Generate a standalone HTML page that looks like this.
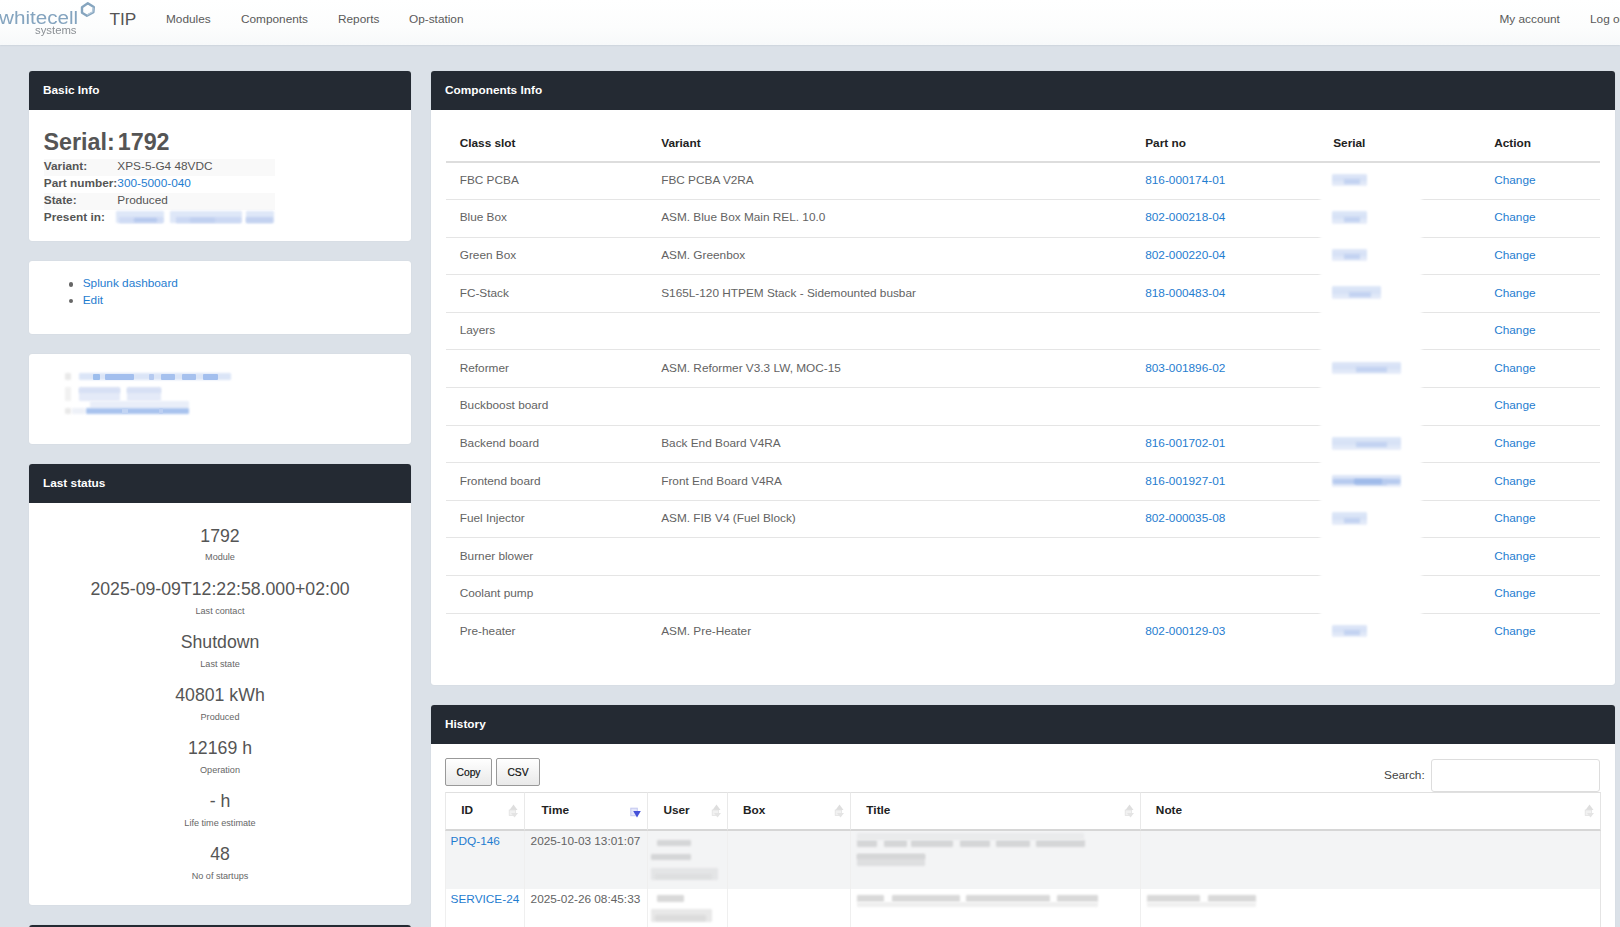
<!DOCTYPE html>
<html lang="en">
<head>
<meta charset="utf-8">
<title>TIP</title>
<style>
*{box-sizing:border-box}
html,body{margin:0;padding:0}
body{width:1620px;height:927px;overflow:hidden;background:#dbe1e8;font-family:"Liberation Sans",Arial,sans-serif;font-size:11.82px;color:#555;position:relative}
a{color:#1f7dd0;text-decoration:none}
#nav{position:absolute;left:0;top:0;width:1620px;height:45px;background:linear-gradient(#fff,#fcfdfd 60%,#f7f9fa);box-shadow:0 0.5px 1.5px rgba(170,182,195,.55)}
#nav .it{position:absolute;top:11.5px;font-size:11.82px;color:#5a5a5a;white-space:nowrap}
#logo1{position:absolute;left:-1px;top:7.7px;font-size:17.5px;line-height:20px;color:#84a4bf;transform-origin:0 0;transform:scaleX(1.18);white-space:nowrap}
#logo2{position:absolute;left:35px;top:25.4px;font-size:10.3px;line-height:12px;color:#8a8f94;transform-origin:0 0;transform:scaleX(1.1)}
#tip{position:absolute;left:109.5px;top:9.2px;font-size:17.3px;line-height:20px;color:#555}
.panel{position:absolute;background:#fff;border-radius:3px;box-shadow:0 0 1px rgba(160,170,180,.4)}
.hd{position:absolute;left:0;top:0;right:0;height:39px;background:#242a33;border-radius:3px 3px 0 0;color:#fff;font-weight:bold;font-size:11.82px;line-height:39px;padding-left:14px}

#p1 h2{position:absolute;left:14.5px;top:57px;margin:0;font-size:23.3px;line-height:28px;font-weight:bold;color:#555;white-space:nowrap;letter-spacing:0}
#bi{position:absolute;left:14.8px;top:87.8px;width:231px;border-collapse:collapse;font-size:11.82px}
#bi td{padding:0 0 2px 0;height:17px;line-height:15px;color:#555;white-space:nowrap}
#bi td.l{font-weight:bold;width:72.3px;color:#555}
#bi tr.o td{background:#f9f9f9}
.blur{position:absolute;filter:blur(1.2px)}

#p2 ul{position:absolute;left:0;top:13.7px;margin:0;padding:0;list-style:none}
#p2 li{position:relative;padding-left:53.7px;height:16.6px;line-height:16.6px;font-size:11.82px;white-space:nowrap}
#p2 li:before{content:"";position:absolute;left:39.6px;top:7.4px;width:4.2px;height:4.2px;border-radius:50%;background:#666}
.st{position:absolute;left:0;width:382px;text-align:center;white-space:nowrap}
.st.v{font-size:17.7px;line-height:20px;color:#555}
.st.k{font-size:9.1px;line-height:12px;color:#666}
#ct{position:absolute;left:14.5px;top:53px;width:1154.5px;border-collapse:collapse;table-layout:fixed;font-size:11.82px}
#ct th{height:38px;padding:0 0 0 14.2px;text-align:left;font-weight:bold;color:#222;border-bottom:2px solid #ddd;white-space:nowrap}
#ct td{height:37.6px;padding:0 0 2px 14.2px;color:#636363;border-top:1px solid #e5e5e5;white-space:nowrap}
#ct tr:first-child td{border-top:0}

.btn{position:absolute;top:53.3px;height:27.4px;border:1px solid #999;border-radius:2px;background:linear-gradient(#fff,#e9e9e9);color:#111;font-size:10.3px;line-height:27px;text-align:center;-webkit-text-stroke:0.2px #111}
#srch{position:absolute;left:953px;top:62px;font-size:11.82px;color:#444;line-height:16px}
#sin{position:absolute;left:1000px;top:53.5px;width:169px;height:33px;border:1px solid #ddd;border-radius:3px;background:#fff}
#ht{position:absolute;left:14px;top:87px;width:1155.5px;border-collapse:separate;border-spacing:0;table-layout:fixed;font-size:11.82px}
#ht th{position:relative;height:39px;padding:0 0 2.6px 15.2px;text-align:left;font-weight:bold;color:#222;border-top:1px solid #e0e0e0;border-left:1px solid #e9e9e9;border-bottom:2px solid #d6d6d6;white-space:nowrap}
#ht th:last-child,#ht td:last-child{border-right:1px solid #e4e4e4}
#ht td{padding:2px 0 0 4.6px;vertical-align:top;color:#636363;border-left:1px solid #efefef;white-space:nowrap;line-height:16px}
#ht tr.o td{background:#f3f4f5}

#ht th:nth-child(2){padding-left:16.6px}
#ht td:nth-child(2){padding-left:5.6px}
.si{position:absolute;right:4px;top:10px;width:14px;height:16px}

.b{position:absolute;filter:blur(1px);border-radius:1px}
.bw{position:absolute;background:#fff;filter:blur(1.5px)}
</style>
</head>
<body>
<div id="nav">
  <div id="logo1">whitecell</div>
  <div id="logo2">systems</div>
  <svg style="position:absolute;left:78px;top:0" width="20" height="20" viewBox="78 0 20 20"><polygon points="87.8,3.3 93.8,7 93.4,12.2 86.9,15.7 82,12.8 82,7.2" fill="none" stroke="#86a5bf" stroke-width="2.4" stroke-linejoin="round"/><polyline points="93.2,7.6 92.8,11.8 86.9,14.9" fill="none" stroke="#b9cddd" stroke-width="1.1" stroke-linejoin="round"/></svg>
  <div id="tip">TIP</div>
  <div class="it" style="left:166px">Modules</div>
  <div class="it" style="left:241px">Components</div>
  <div class="it" style="left:338px">Reports</div>
  <div class="it" style="left:409px">Op-station</div>
  <div class="it" style="left:1499.5px">My account</div>
  <div class="it" style="left:1590px">Log out</div>
</div>

<!-- Basic info -->
<div class="panel" id="p1" style="left:29px;top:71px;width:382px;height:170px">
  <div class="hd">Basic Info</div>
  <h2>Serial:<span style="margin-left:3px">1792</span></h2>
  <table id="bi">
    <tr class="o"><td class="l">Variant:</td><td>XPS-5-G4 48VDC</td></tr>
    <tr><td class="l">Part number:</td><td><a>300-5000-040</a></td></tr>
    <tr class="o"><td class="l">State:</td><td>Produced</td></tr>
    <tr><td class="l">Present in:</td><td></td></tr>
  </table>
<div class="b" style="left:86.5px;top:139.8px;width:48.5px;height:12.5px;background:#dee7f8"></div><div class="b" style="left:140.5px;top:139.8px;width:72.5px;height:12.5px;background:#dee7f8"></div><div class="b" style="left:216.5px;top:139.8px;width:28.1px;height:12.5px;background:#dee7f8"></div><div class="b" style="left:90.0px;top:146.3px;width:44.0px;height:5.3px;background:#cfdbf4"></div><div class="b" style="left:105.0px;top:146.6px;width:23.0px;height:4.7px;background:#b6c9ee"></div><div class="b" style="left:147.0px;top:146.3px;width:65.0px;height:5.3px;background:#cbd8f3"></div><div class="b" style="left:161.0px;top:147.0px;width:25.0px;height:4.0px;background:#bfcff0"></div><div class="b" style="left:217.0px;top:146.3px;width:27.0px;height:5.3px;background:#c3d2f0"></div>
</div>
<div class="panel" id="p2" style="left:29px;top:261.3px;width:382px;height:72.9px">
  <ul><li><a>Splunk dashboard</a></li><li><a>Edit</a></li></ul>
</div>
<div class="panel" id="p3" style="left:29px;top:353.5px;width:382px;height:90.8px"><div class="b" style="left:36.0px;top:19.8px;width:6.4px;height:6.7px;background:#e9e9e9"></div><div class="b" style="left:49.5px;top:19.8px;width:152.5px;height:6.9px;background:#dbe5f7"></div><div class="b" style="left:63.5px;top:20.1px;width:7.1px;height:6.4px;background:#9dbeed;filter:blur(0.7px)"></div><div class="b" style="left:76.4px;top:20.1px;width:28.8px;height:6.4px;background:#a3bfee;filter:blur(0.7px)"></div><div class="b" style="left:120.0px;top:20.1px;width:5.0px;height:6.4px;background:#b5caf0;filter:blur(0.7px)"></div><div class="b" style="left:132.0px;top:20.1px;width:14.0px;height:6.4px;background:#a6c1ee;filter:blur(0.7px)"></div><div class="b" style="left:153.0px;top:20.1px;width:14.0px;height:6.4px;background:#a6c1ee;filter:blur(0.7px)"></div><div class="b" style="left:173.8px;top:20.1px;width:15.2px;height:6.4px;background:#a3bfee;filter:blur(0.7px)"></div><div class="b" style="left:36.0px;top:33.7px;width:6.4px;height:13.5px;background:#f1f1f1"></div><div class="b" style="left:50.0px;top:33.7px;width:41.0px;height:13.5px;background:#e4eaf8"></div><div class="b" style="left:50.0px;top:34.0px;width:41.0px;height:5.5px;background:#d7e0f4"></div><div class="b" style="left:98.0px;top:33.7px;width:34.0px;height:13.5px;background:#e4eaf8"></div><div class="b" style="left:98.0px;top:34.0px;width:34.0px;height:5.5px;background:#d7e0f4"></div><div class="b" style="left:36.0px;top:54.2px;width:6.4px;height:6.5px;background:#e9e9e9"></div><div class="b" style="left:43.0px;top:54.2px;width:13.0px;height:6.5px;background:#eef1f8"></div><div class="b" style="left:61.0px;top:47.5px;width:98.7px;height:7.0px;background:#e9eef9"></div><div class="b" style="left:56.5px;top:54.2px;width:103.2px;height:6.7px;background:#a9c3ee"></div><div class="b" style="left:93.0px;top:54.2px;width:6.0px;height:6.7px;background:#c2d4f3;filter:blur(0.6px)"></div><div class="b" style="left:130.0px;top:54.2px;width:4.0px;height:6.7px;background:#bccff2;filter:blur(0.6px)"></div></div>
<div class="panel" id="p4" style="left:29px;top:464px;width:382px;height:441px">
  <div class="hd">Last status</div>
  <div class="st v" style="top:62.0px">1792</div>
  <div class="st k" style="top:87.0px">Module</div>
  <div class="st v" style="top:115.0px">2025-09-09T12:22:58.000+02:00</div>
  <div class="st k" style="top:141.0px">Last contact</div>
  <div class="st v" style="top:168.0px">Shutdown</div>
  <div class="st k" style="top:194.0px">Last state</div>
  <div class="st v" style="top:221.0px">40801 kWh</div>
  <div class="st k" style="top:247.0px">Produced</div>
  <div class="st v" style="top:274.0px">12169 h</div>
  <div class="st k" style="top:300.0px">Operation</div>
  <div class="st v" style="top:327.0px">- h</div>
  <div class="st k" style="top:353.0px">Life time estimate</div>
  <div class="st v" style="top:380.0px">48</div>
  <div class="st k" style="top:406.0px">No of startups</div>

</div>
<div class="panel" id="p5" style="left:29px;top:925px;width:382px;height:60px">
  <div class="hd"></div>
</div>
<div class="panel" id="p6" style="left:431px;top:71px;width:1184px;height:614px">
  <div class="hd">Components Info</div>
<table id="ct"><colgroup><col style="width:201.5px"><col style="width:484px"><col style="width:188px"><col style="width:161px"><col></colgroup>
<thead><tr><th>Class slot</th><th>Variant</th><th>Part no</th><th>Serial</th><th>Action</th></tr></thead>
<tbody>
<tr><td>FBC PCBA</td><td>FBC PCBA V2RA</td><td><a>816-000174-01</a></td><td></td><td><a>Change</a></td></tr>
<tr><td>Blue Box</td><td>ASM. Blue Box Main REL. 10.0</td><td><a>802-000218-04</a></td><td></td><td><a>Change</a></td></tr>
<tr><td>Green Box</td><td>ASM. Greenbox</td><td><a>802-000220-04</a></td><td></td><td><a>Change</a></td></tr>
<tr><td>FC-Stack</td><td>S165L-120 HTPEM Stack - Sidemounted busbar</td><td><a>818-000483-04</a></td><td></td><td><a>Change</a></td></tr>
<tr><td>Layers</td><td></td><td></td><td></td><td><a>Change</a></td></tr>
<tr><td>Reformer</td><td>ASM. Reformer V3.3 LW, MOC-15</td><td><a>803-001896-02</a></td><td></td><td><a>Change</a></td></tr>
<tr><td>Buckboost board</td><td></td><td></td><td></td><td><a>Change</a></td></tr>
<tr><td>Backend board</td><td>Back End Board V4RA</td><td><a>816-001702-01</a></td><td></td><td><a>Change</a></td></tr>
<tr><td>Frontend board</td><td>Front End Board V4RA</td><td><a>816-001927-01</a></td><td></td><td><a>Change</a></td></tr>
<tr><td>Fuel Injector</td><td>ASM. FIB V4 (Fuel Block)</td><td><a>802-000035-08</a></td><td></td><td><a>Change</a></td></tr>
<tr><td>Burner blower</td><td></td><td></td><td></td><td><a>Change</a></td></tr>
<tr><td>Coolant pump</td><td></td><td></td><td></td><td><a>Change</a></td></tr>
<tr><td>Pre-heater</td><td>ASM. Pre-Heater</td><td><a>802-000129-03</a></td><td></td><td><a>Change</a></td></tr>
</tbody></table>
<div class="bw" style="left:889.0px;top:95.0px;width:102.0px;height:482.0px"></div><div class="b" style="left:901.0px;top:102.7px;width:35.0px;height:12.8px;background:linear-gradient(#dfe8f8,#d6e1f6 45%,#dbe5f7 60%,#e9eefa)"></div><div class="b" style="left:913.2px;top:108.0px;width:15.8px;height:5.0px;background:#c3d3f1"></div><div class="b" style="left:901.0px;top:140.2px;width:35.0px;height:12.8px;background:linear-gradient(#dfe8f8,#d6e1f6 45%,#dbe5f7 60%,#e9eefa)"></div><div class="b" style="left:913.2px;top:145.5px;width:15.8px;height:5.0px;background:#c3d3f1"></div><div class="b" style="left:901.0px;top:177.7px;width:35.0px;height:12.8px;background:linear-gradient(#dfe8f8,#d6e1f6 45%,#dbe5f7 60%,#e9eefa)"></div><div class="b" style="left:913.2px;top:183.0px;width:15.8px;height:5.0px;background:#c3d3f1"></div><div class="b" style="left:901.0px;top:215.4px;width:48.5px;height:12.8px;background:linear-gradient(#dfe8f8,#d6e1f6 45%,#dbe5f7 60%,#e9eefa)"></div><div class="b" style="left:918.0px;top:220.7px;width:21.8px;height:5.0px;background:#c3d3f1"></div><div class="b" style="left:901.0px;top:290.7px;width:69.0px;height:12.8px;background:linear-gradient(#dfe8f8,#d6e1f6 45%,#dbe5f7 60%,#e9eefa)"></div><div class="b" style="left:925.2px;top:296.0px;width:31.0px;height:5.0px;background:#c3d3f1"></div><div class="b" style="left:901.0px;top:366.1px;width:69.0px;height:12.8px;background:linear-gradient(#dfe8f8,#d6e1f6 45%,#dbe5f7 60%,#e9eefa)"></div><div class="b" style="left:925.2px;top:371.4px;width:31.0px;height:5.0px;background:#c3d3f1"></div><div class="b" style="left:901.0px;top:403.5px;width:69.0px;height:12.8px;background:linear-gradient(#dfe8f8,#d6e1f6 45%,#dbe5f7 60%,#e9eefa)"></div><div class="b" style="left:925.2px;top:408.8px;width:31.0px;height:5.0px;background:#c3d3f1"></div><div class="b" style="left:901.0px;top:441.2px;width:35.0px;height:12.8px;background:linear-gradient(#dfe8f8,#d6e1f6 45%,#dbe5f7 60%,#e9eefa)"></div><div class="b" style="left:913.2px;top:446.5px;width:15.8px;height:5.0px;background:#c3d3f1"></div><div class="b" style="left:901.0px;top:553.7px;width:35.0px;height:12.8px;background:linear-gradient(#dfe8f8,#d6e1f6 45%,#dbe5f7 60%,#e9eefa)"></div><div class="b" style="left:913.2px;top:559.0px;width:15.8px;height:5.0px;background:#c3d3f1"></div><div class="b" style="left:902.0px;top:407.5px;width:67.0px;height:5.0px;background:#b7cbef"></div><div class="b" style="left:923.0px;top:407.5px;width:28.0px;height:5.0px;background:#9fbbea"></div>
</div>
<div class="panel" id="p7" style="left:431px;top:705px;width:1184px;height:300px">
  <div class="hd">History</div>
<div class="btn" style="left:14px;width:47px">Copy</div>
<div class="btn" style="left:65px;width:44px">CSV</div>
<div id="srch">Search:</div><div id="sin"></div>
<table id="ht"><colgroup><col style="width:79px"><col style="width:123.2px"><col style="width:79.7px"><col style="width:123.3px"><col style="width:289.5px"><col></colgroup>
<thead><tr><th>ID<svg class="si" viewBox="0 0 14 16"><polygon points="7.5,1.5 11.5,7 3.5,7" fill="#dedede"/><rect x="3.2" y="7" width="6.3" height="5.5" fill="#f1f1f1" stroke="#e3e3e3" stroke-width=".8"/><polygon points="5,10 12,10 8.5,14.5" fill="#e4e4e4"/></svg></th><th>Time<svg class="si" viewBox="0 0 14 16"><rect x="1.8" y="5.2" width="6.5" height="7.5" fill="#e4e6fa" stroke="#c3c8f0" stroke-width="1"/><polygon points="4.2,8 11.8,8 8,14.6" fill="#4450d8"/></svg></th><th>User<svg class="si" viewBox="0 0 14 16"><polygon points="7.5,1.5 11.5,7 3.5,7" fill="#dedede"/><rect x="3.2" y="7" width="6.3" height="5.5" fill="#f1f1f1" stroke="#e3e3e3" stroke-width=".8"/><polygon points="5,10 12,10 8.5,14.5" fill="#e4e4e4"/></svg></th><th>Box<svg class="si" viewBox="0 0 14 16"><polygon points="7.5,1.5 11.5,7 3.5,7" fill="#dedede"/><rect x="3.2" y="7" width="6.3" height="5.5" fill="#f1f1f1" stroke="#e3e3e3" stroke-width=".8"/><polygon points="5,10 12,10 8.5,14.5" fill="#e4e4e4"/></svg></th><th>Title<svg class="si" viewBox="0 0 14 16"><polygon points="7.5,1.5 11.5,7 3.5,7" fill="#dedede"/><rect x="3.2" y="7" width="6.3" height="5.5" fill="#f1f1f1" stroke="#e3e3e3" stroke-width=".8"/><polygon points="5,10 12,10 8.5,14.5" fill="#e4e4e4"/></svg></th><th>Note<svg class="si" viewBox="0 0 14 16"><polygon points="7.5,1.5 11.5,7 3.5,7" fill="#dedede"/><rect x="3.2" y="7" width="6.3" height="5.5" fill="#f1f1f1" stroke="#e3e3e3" stroke-width=".8"/><polygon points="5,10 12,10 8.5,14.5" fill="#e4e4e4"/></svg></th></tr></thead>
<tbody>
<tr class="o" style="height:58px"><td><a>PDQ-146</a></td><td>2025-10-03 13:01:07</td><td></td><td></td><td></td><td></td></tr>
<tr style="height:60px"><td><a>SERVICE-24</a></td><td>2025-02-26 08:45:33</td><td></td><td></td><td></td><td></td></tr>
</tbody></table>
<div class="b" style="left:225.6px;top:135.0px;width:34.0px;height:6.0px;background:#d5d6d7"></div><div class="b" style="left:220.0px;top:148.7px;width:39.6px;height:6.7px;background:#d5d6d7"></div><div class="b" style="left:220.0px;top:162.5px;width:67.0px;height:12.5px;background:#e4e5e6"></div><div class="b" style="left:224.0px;top:169.0px;width:57.0px;height:5.0px;background:#dedfe0"></div><div class="b" style="left:426.3px;top:135.0px;width:19.7px;height:6.5px;background:#d5d6d7"></div><div class="b" style="left:453.0px;top:135.0px;width:23.0px;height:6.5px;background:#d5d6d7"></div><div class="b" style="left:480.0px;top:135.0px;width:42.0px;height:6.5px;background:#d5d6d7"></div><div class="b" style="left:529.0px;top:135.0px;width:30.0px;height:6.5px;background:#d5d6d7"></div><div class="b" style="left:565.0px;top:135.0px;width:34.0px;height:6.5px;background:#d5d6d7"></div><div class="b" style="left:605.0px;top:135.0px;width:48.5px;height:6.5px;background:#d5d6d7"></div><div class="b" style="left:426.3px;top:128.0px;width:226.7px;height:7.0px;background:#eaebec"></div><div class="b" style="left:426.3px;top:148.7px;width:68.0px;height:12.6px;background:#dedfe0"></div><div class="b" style="left:426.3px;top:148.7px;width:68.0px;height:5.3px;background:#d5d6d7"></div><div class="b" style="left:225.6px;top:190.2px;width:27.7px;height:6.7px;background:#d9d9d9"></div><div class="b" style="left:220.0px;top:204.0px;width:61.0px;height:12.6px;background:#e8e8e8"></div><div class="b" style="left:224.0px;top:210.0px;width:51.0px;height:5.5px;background:#dcdcdc"></div><div class="b" style="left:426.3px;top:190.2px;width:26.7px;height:6.7px;background:#d9d9d9"></div><div class="b" style="left:461.0px;top:190.2px;width:68.0px;height:6.7px;background:#d9d9d9"></div><div class="b" style="left:535.0px;top:190.2px;width:84.0px;height:6.7px;background:#d9d9d9"></div><div class="b" style="left:626.0px;top:190.2px;width:41.3px;height:6.7px;background:#d9d9d9"></div><div class="b" style="left:426.3px;top:196.9px;width:241.0px;height:5.1px;background:#efefef"></div><div class="b" style="left:716.0px;top:190.2px;width:53.0px;height:6.7px;background:#d9d9d9"></div><div class="b" style="left:777.0px;top:190.2px;width:48.4px;height:6.7px;background:#d9d9d9"></div><div class="b" style="left:716.0px;top:196.9px;width:109.0px;height:5.1px;background:#f0f0f0"></div>
</div>
</body>
</html>
